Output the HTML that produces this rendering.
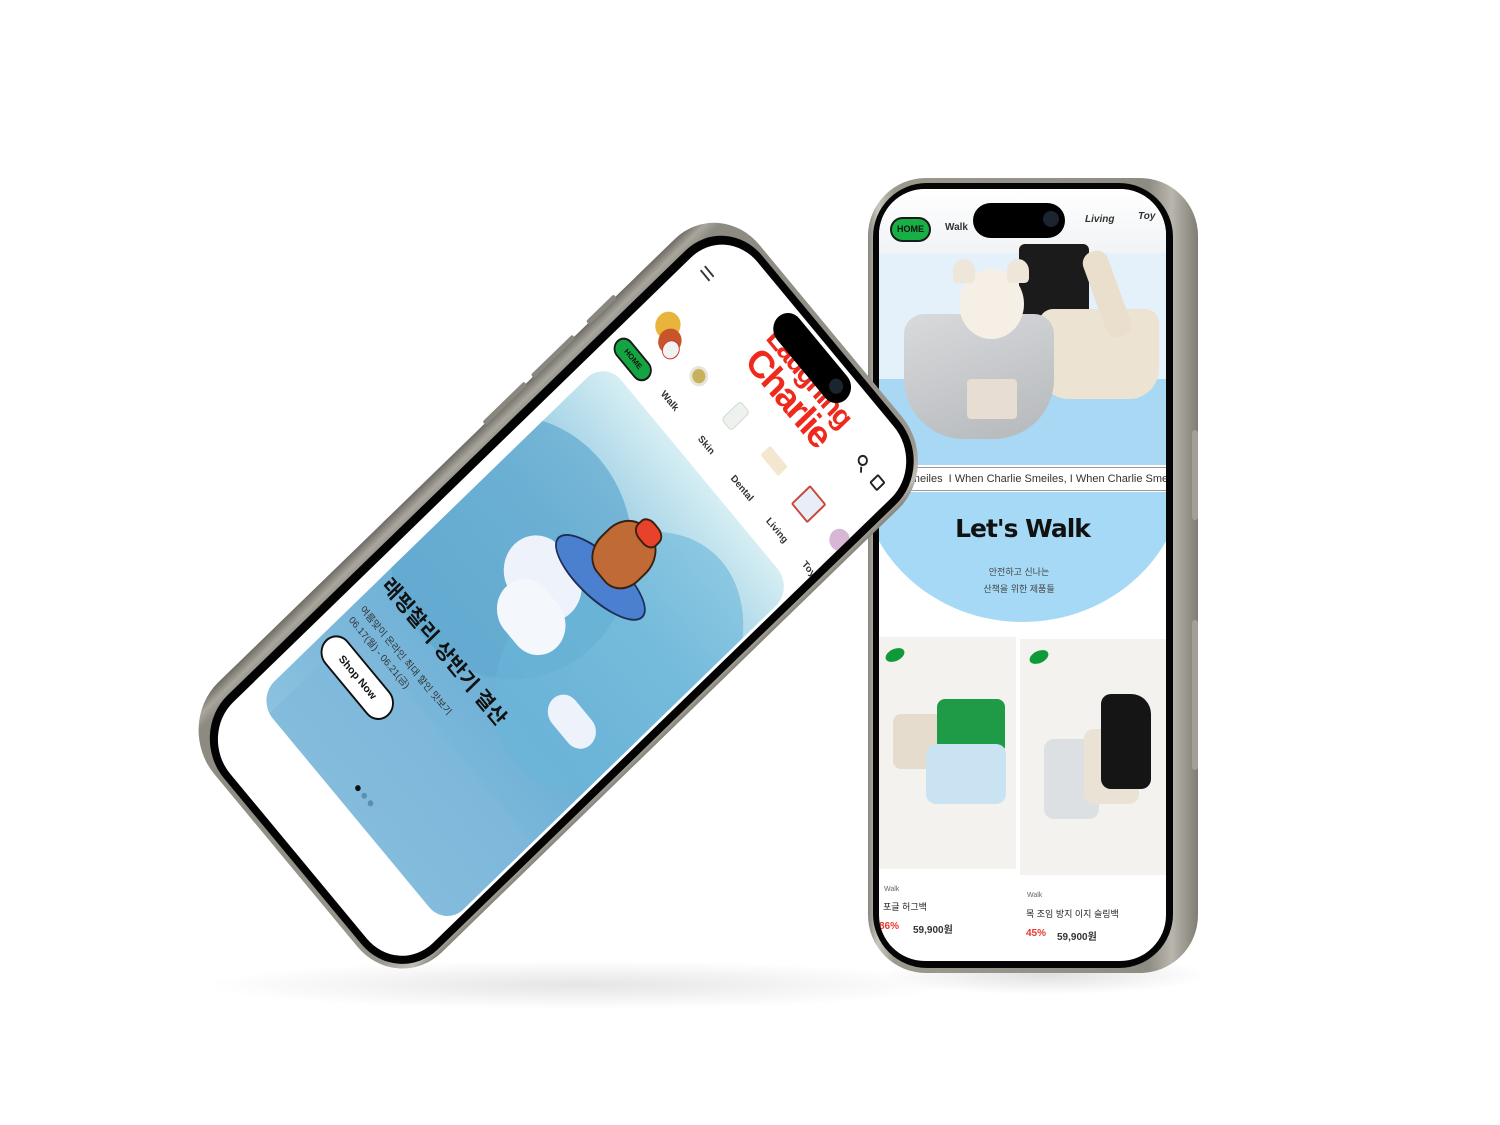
<!DOCTYPE html>
<html><head><meta charset="utf-8"><style>
*{margin:0;padding:0;box-sizing:border-box}
body{width:1500px;height:1125px;background:#fff;position:relative;overflow:hidden;font-family:"Liberation Sans","Noto Sans CJK KR",sans-serif}
.abs{position:absolute}
.k{font-family:"Liberation Sans","Noto Sans CJK KR",sans-serif}
</style></head><body>

<div class="abs" style="left:200px;top:960px;width:760px;height:50px;border-radius:50%;background:radial-gradient(ellipse at center,rgba(0,0,0,0.10),rgba(0,0,0,0) 70%)"></div>
<div class="abs" style="left:880px;top:955px;width:330px;height:40px;border-radius:50%;background:radial-gradient(ellipse at center,rgba(0,0,0,0.12),rgba(0,0,0,0) 70%)"></div>

<!-- RIGHT PHONE -->
<div class="abs" style="left:868px;top:178px;width:330px;height:795px;border-radius:58px;background:linear-gradient(90deg,#8a877f 0%,#c9c6be 3%,#9c998f 8%,#8f8c84 85%,#b9b6ad 92%,#7f7c74 100%)"></div>
<div class="abs" style="left:1192px;top:430px;width:6px;height:90px;border-radius:3px;background:#a29f97"></div>
<div class="abs" style="left:1192px;top:620px;width:6px;height:150px;border-radius:3px;background:#a29f97"></div>
<div class="abs" style="left:873px;top:183px;width:300px;height:785px;border-radius:54px;background:#050505"></div>
<div class="abs" style="left:879px;top:189px;width:287px;height:772px;border-radius:46px;background:#fff;overflow:hidden">
  <div class="abs" style="left:0;top:0;width:287px;height:64px;background:linear-gradient(180deg,#fff,#f1f3f5)"></div>
  <div class="abs" style="left:11px;top:28px;width:41px;height:25px;border-radius:13px;background:#16b045;border:2px solid #1a1a1a;color:#111;font-size:9px;font-weight:bold;text-align:center;line-height:21px">HOME</div>
  <div class="abs" style="left:66px;top:33px;font-size:10px;font-weight:bold;color:#333">Walk</div>
  <div class="abs" style="left:206px;top:25px;font-size:10px;font-weight:bold;color:#333;font-style:italic">Living</div>
  <div class="abs" style="left:259px;top:22px;font-size:10px;font-weight:bold;color:#333;font-style:italic">Toy</div>
  <div class="abs" style="left:0;top:64px;width:287px;height:212px;background:#e4f1fa"></div>
  <div class="abs" style="left:0;top:190px;width:287px;height:86px;background:#a8d8f4"></div>
  <div class="abs" style="left:140px;top:55px;width:70px;height:110px;background:#1b1b1b;border-radius:6px"></div>
  <div class="abs" style="left:160px;top:120px;width:120px;height:90px;background:#ece3d3;border-radius:14px 14px 30px 30px"></div>
  <div class="abs" style="left:215px;top:60px;width:26px;height:90px;background:#e9dfcc;border-radius:12px;transform:rotate(-20deg)"></div>
  <div class="abs" style="left:25px;top:125px;width:150px;height:125px;background:linear-gradient(160deg,#d8dadc,#b5b8bb);border-radius:20px 20px 60px 60px"></div>
  <div class="abs" style="left:80px;top:80px;width:65px;height:70px;background:#f5efe6;border-radius:50%"></div>
  <div class="abs" style="left:74px;top:70px;width:22px;height:24px;background:#efe6da;border-radius:50% 50% 20% 20%"></div>
  <div class="abs" style="left:128px;top:70px;width:22px;height:24px;background:#efe6da;border-radius:50% 50% 20% 20%"></div>
  <div class="abs" style="left:88px;top:190px;width:50px;height:40px;background:#e8ddd2;border-radius:4px"></div>
  <div class="abs" style="left:0;top:278px;width:287px;height:24px;background:#fff;border-top:1px solid #999;border-bottom:1px solid #999;font-size:11px;color:#333;line-height:22px;white-space:nowrap">&nbsp;&nbsp;&nbsp;&nbsp;&nbsp;&nbsp;&nbsp;&nbsp;Smeiles &nbsp;I When Charlie Smeiles, I When Charlie Smeiles</div>
  <div class="abs" style="left:0;top:303px;width:287px;height:130px;overflow:hidden">
    <div class="abs" style="left:-20px;top:-180px;width:327px;height:310px;border-radius:50%;background:#a6d9f6"></div>
  </div>
  <div class="abs" style="left:0;top:325px;width:287px;text-align:center;font-size:25px;font-weight:900;color:#111;letter-spacing:-1px;font-family:'DejaVu Sans','Liberation Sans',sans-serif">Let's Walk</div>
  <div class="abs k" style="left:0;top:375px;width:280px;text-align:center;font-size:9px;color:#444;line-height:17px">안전하고 신나는<br>산책을 위한 제품들</div>
  <div class="abs" style="left:0;top:448px;width:137px;height:232px;background:#f3f2ee"></div>
  <div class="abs" style="left:141px;top:450px;width:146px;height:236px;background:#f3f2ee"></div>
  <div class="abs" style="left:6px;top:460px;width:20px;height:12px;border-radius:50%;background:#0f9a3a;transform:rotate(-25deg)"></div>
  <div class="abs" style="left:150px;top:462px;width:20px;height:12px;border-radius:50%;background:#0f9a3a;transform:rotate(-25deg)"></div>
  <div class="abs" style="left:14px;top:525px;width:68px;height:55px;background:#e5dccd;border-radius:8px"></div>
  <div class="abs" style="left:58px;top:510px;width:68px;height:55px;background:#1f9a47;border-radius:8px"></div>
  <div class="abs" style="left:47px;top:555px;width:80px;height:60px;background:#c9e3f2;border-radius:10px"></div>
  <div class="abs" style="left:165px;top:550px;width:55px;height:80px;background:#dde0e3;border-radius:10px"></div>
  <div class="abs" style="left:205px;top:540px;width:55px;height:75px;background:#e9e2d5;border-radius:10px"></div>
  <div class="abs" style="left:222px;top:505px;width:50px;height:95px;background:#151515;border-radius:10px 20px 10px 10px"></div>
  <div class="abs" style="left:5px;top:697px;font-size:7px;color:#666">Walk</div>
  <div class="abs k" style="left:4px;top:711px;font-size:9px;color:#222">포글 허그백</div>
  <div class="abs" style="left:0px;top:732px;font-size:10px;font-weight:bold;color:#e8372f">86%</div>
  <div class="abs k" style="left:34px;top:732px;font-size:10px;font-weight:bold;color:#333">59,900원</div>
  <div class="abs" style="left:148px;top:703px;font-size:7px;color:#666">Walk</div>
  <div class="abs k" style="left:147px;top:718px;font-size:9px;color:#222">목 조임 방지 이지 슬링백</div>
  <div class="abs" style="left:147px;top:739px;font-size:10px;font-weight:bold;color:#e8372f">45%</div>
  <div class="abs k" style="left:178px;top:739px;font-size:10px;font-weight:bold;color:#333">59,900원</div>
</div>
<div class="abs" style="left:973px;top:203px;width:92px;height:35px;border-radius:18px;background:#000"></div>
<div class="abs" style="left:1043px;top:211px;width:16px;height:16px;border-radius:50%;background:#1b2530"></div>

<!-- LEFT PHONE (front) -->
<div class="abs" style="left:0;top:0;width:355px;height:790px;transform-origin:0 0;transform:matrix(0.63,0.76,-0.69,0.67,719,196.1)">
  <div class="abs" style="left:0;top:0;width:355px;height:790px;border-radius:64px;background:linear-gradient(90deg,#6e6b64 0%,#a9a69e 3%,#8d8a82 6%,#9a978f 90%,#c2bfb7 97%,#85827a 100%)"></div>
  <div class="abs" style="left:-3px;top:150px;width:5px;height:40px;background:#8a877f;border-radius:2px"></div>
  <div class="abs" style="left:-3px;top:210px;width:5px;height:60px;background:#8a877f;border-radius:2px"></div>
  <div class="abs" style="left:-3px;top:280px;width:5px;height:60px;background:#8a877f;border-radius:2px"></div>
  <div class="abs" style="left:16px;top:5px;width:334px;height:780px;border-radius:58px;background:#030303"></div>
  <div class="abs" style="left:25px;top:13px;width:317px;height:764px;border-radius:50px;background:#fff;overflow:hidden">
    <div class="abs" style="left:16px;top:44px;width:14px;height:2px;background:#333"></div>
    <div class="abs" style="left:16px;top:50px;width:14px;height:2px;background:#333"></div>
    <div class="abs" style="left:96px;top:22px;width:150px;text-align:center;color:#ef2a1d;font-weight:900;font-size:30px;line-height:28px;letter-spacing:-2px">Laughing</div>
    <div class="abs" style="left:96px;top:48px;width:150px;text-align:center;color:#ef2a1d;font-weight:900;font-size:38px;line-height:36px;letter-spacing:-2px">Charlie</div>
    <div class="abs" style="left:264px;top:42px;width:11px;height:11px;border:2px solid #222;border-radius:50%"></div>
    <div class="abs" style="left:274px;top:52px;width:2px;height:6px;background:#222;transform:rotate(-45deg)"></div>
    <div class="abs" style="left:290px;top:44px;width:12px;height:13px;border:2px solid #222;border-radius:2px"></div>
    <div class="abs" style="left:20px;top:100px;width:26px;height:28px;border-radius:50%;background:#e8b43c"></div>
    <div class="abs" style="left:34px;top:110px;width:24px;height:26px;border-radius:50%;background:#c8542a"></div>
    <div class="abs" style="left:44px;top:118px;width:18px;height:20px;border-radius:50%;background:#f2f2f2;border:1px solid #c33"></div>
    <div class="abs" style="left:82px;top:113px;width:20px;height:20px;border-radius:50%;background:#c7b15a;border:3px solid #e9e4d8"></div>
    <div class="abs" style="left:139px;top:106px;width:16px;height:28px;border-radius:4px;background:#eef2ee;border:1px solid #cfd9cf"></div>
    <div class="abs" style="left:193px;top:112px;width:28px;height:14px;border-radius:2px;background:#f3e7d0"></div>
    <div class="abs" style="left:250px;top:106px;width:26px;height:28px;border-radius:2px;background:#e8eef7;border:2px solid #c9473c"></div>
    <div class="abs" style="left:300px;top:108px;width:22px;height:22px;border-radius:50%;background:#d8b7d6"></div>
    <div class="abs" style="left:8px;top:154px;width:50px;height:22px;border-radius:12px;background:#14a542;border:2px solid #1a1a1a;font-size:8px;font-weight:bold;color:#111;text-align:center;line-height:18px">HOME</div>
    <div class="abs" style="left:78px;top:158px;font-size:10px;font-weight:bold;color:#333">Walk</div>
    <div class="abs" style="left:137px;top:158px;font-size:10px;font-weight:bold;color:#333">Skin</div>
    <div class="abs" style="left:189px;top:158px;font-size:10px;font-weight:bold;color:#333">Dental</div>
    <div class="abs" style="left:245px;top:158px;font-size:10px;font-weight:bold;color:#333">Living</div>
    <div class="abs" style="left:302px;top:158px;font-size:10px;font-weight:bold;color:#333">Toy</div>
    <div class="abs" style="left:14px;top:188px;width:300px;height:505px;border-radius:26px;overflow:hidden;background:linear-gradient(180deg,#d6eef3 0%,#86c2df 30%,#6eb0d6 60%,#8cc2df 100%)">
      <div class="abs" style="left:-60px;top:70px;width:260px;height:260px;border-radius:50%;background:#5fa8cf;opacity:.7"></div>
      <div class="abs" style="left:120px;top:40px;width:220px;height:300px;border-radius:50%;background:#69b5d8;opacity:.6"></div>
      <div class="abs" style="left:70px;top:160px;width:90px;height:70px;border-radius:40px;background:#eef3fb"></div>
      <div class="abs" style="left:95px;top:200px;width:80px;height:60px;border-radius:35px;background:#f4f7fc"></div>
      <div class="abs" style="left:210px;top:250px;width:60px;height:34px;border-radius:20px;background:#eef3fb"></div>
      <div class="abs" style="left:95px;top:125px;width:120px;height:46px;border-radius:50%;background:#4b7fd0;border:2px solid #1e2f55;transform:rotate(-8deg)"></div>
      <div class="abs" style="left:125px;top:78px;width:60px;height:70px;border-radius:45% 45% 40% 40%;background:#c06a36;border:2px solid #3a2010"></div>
      <div class="abs" style="left:142px;top:68px;width:30px;height:24px;border-radius:40%;background:#e8432a;border:2px solid #3a2010"></div>
      <div class="abs" style="left:20px;top:380px;width:280px;height:125px;background:#7fb8da;opacity:.6"></div>
    </div>
    <div class="abs k" style="left:20px;top:495px;font-size:21px;font-weight:bold;color:#111;white-space:nowrap">래핑찰리 상반기 결산</div>
    <div class="abs k" style="left:22px;top:539px;font-size:10px;color:#333;white-space:nowrap">여름맞이 온라인 최대 할인 맛보기</div>
    <div class="abs k" style="left:22px;top:555px;font-size:10px;color:#333;white-space:nowrap">06.17(월) - 06.21(금)</div>
    <div class="abs" style="left:20px;top:581px;width:100px;height:34px;border-radius:18px;background:#fff;border:2px solid #111;font-size:11px;font-weight:bold;color:#111;text-align:center;line-height:30px">Shop Now</div>
    <div class="abs" style="left:148px;top:668px;width:6px;height:6px;border-radius:50%;background:#111"></div>
    <div class="abs" style="left:158px;top:668px;width:6px;height:6px;border-radius:50%;background:#5a8fb3"></div>
    <div class="abs" style="left:168px;top:668px;width:6px;height:6px;border-radius:50%;background:#5a8fb3"></div>
  </div>
  <div class="abs" style="left:130px;top:17px;width:108px;height:32px;border-radius:16px;background:#000"></div>
  <div class="abs" style="left:214px;top:25px;width:15px;height:15px;border-radius:50%;background:#1b2530"></div>
</div>

</body></html>
